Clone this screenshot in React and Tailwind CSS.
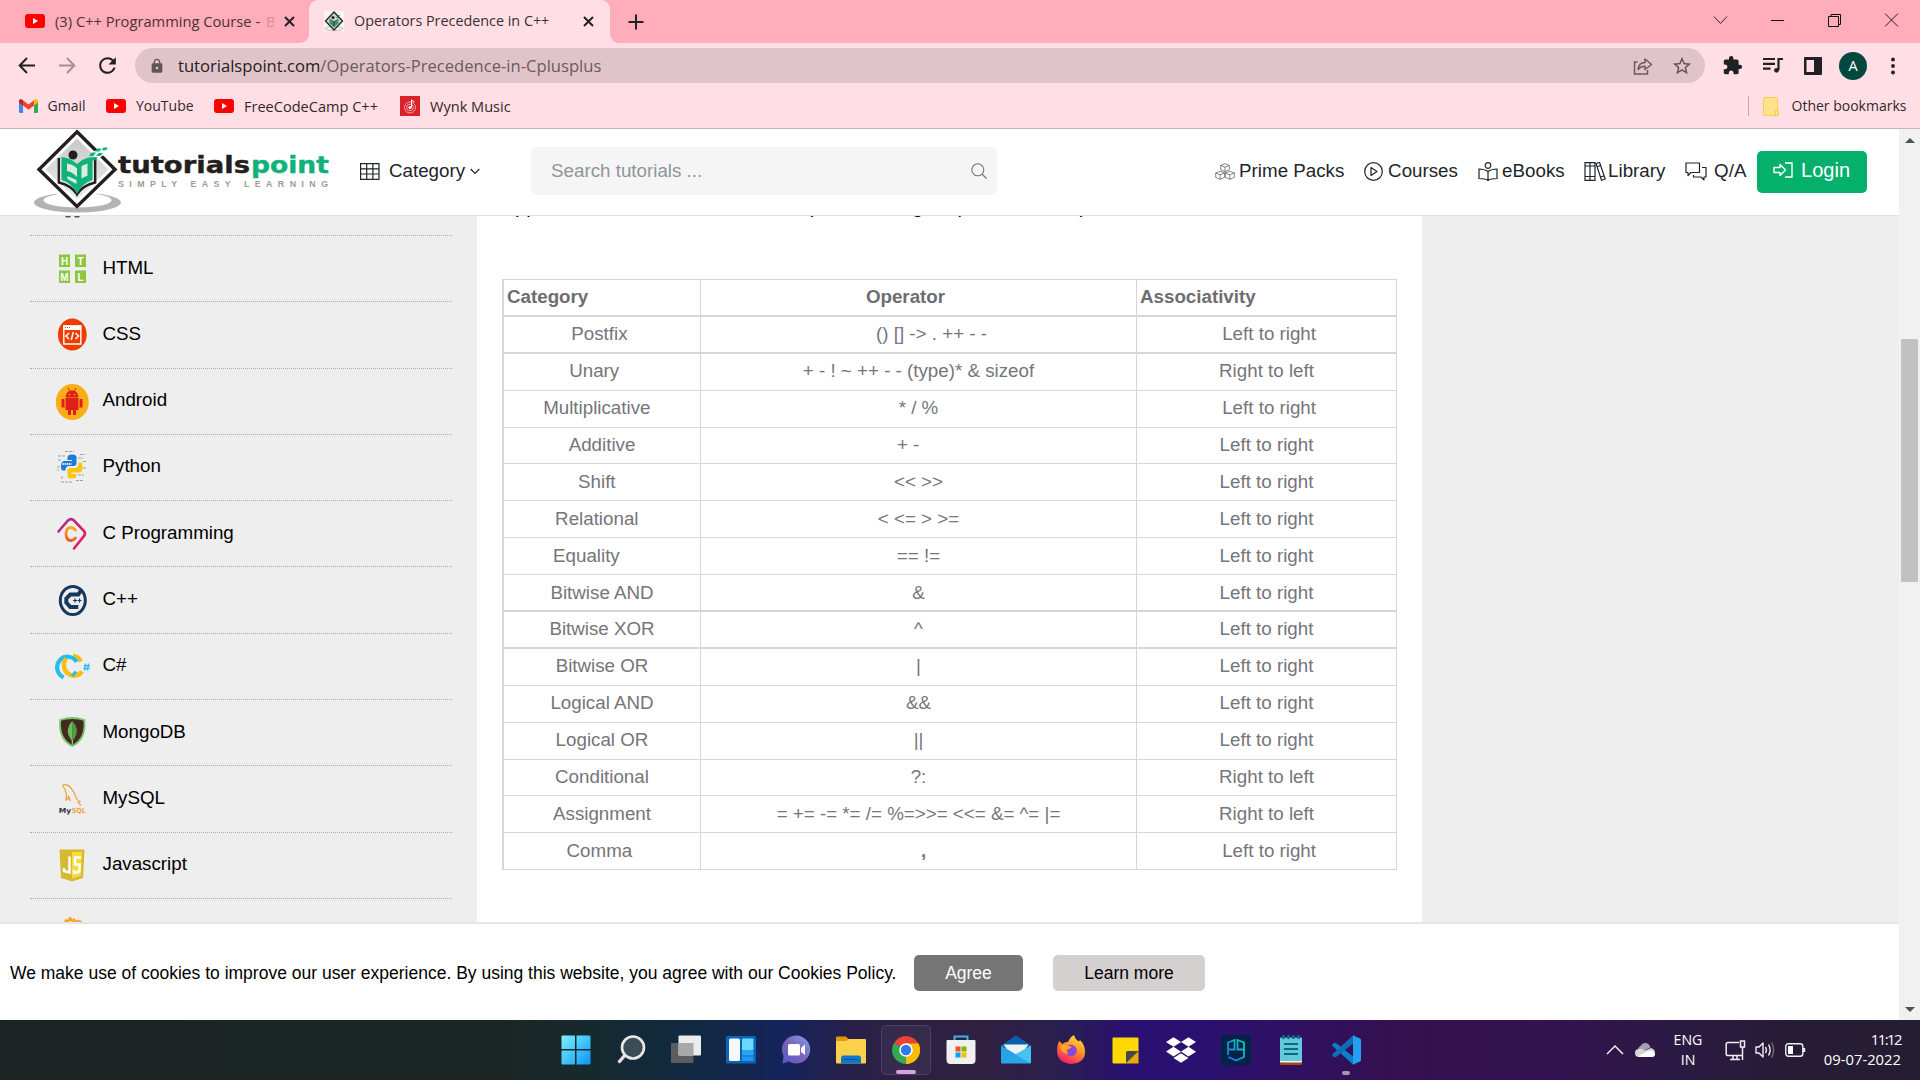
import { FaDropbox } from "react-icons/fa";
import { MdExtension, MdLock, MdRefresh, MdStarBorder } from "react-icons/md";

const SANS = "font-['Liberation_Sans',Arial,sans-serif]";
const UI = "font-['Open_Sans','Noto_Sans',sans-serif]";

/* ---------- browser chrome ---------- */

function YouTubeIcon() {
  return (
    <svg width="20" height="14" viewBox="0 0 20 14" className="shrink-0">
      <rect width="20" height="14" rx="3" fill="#f00" />
      <path d="M8 4v6l5-3z" fill="#fff" />
    </svg>
  );
}

function CloseX() {
  return (
    <svg width="11" height="11" viewBox="0 0 11 11" className="shrink-0">
      <path d="M1 1l9 9M10 1l-9 9" stroke="#202124" strokeWidth="2" />
    </svg>
  );
}

function TabStrip() {
  return (
    <div className="flex h-[43px] bg-[#ffacbb]">
      <div className="flex h-full w-[309px] items-center pb-[1px] pl-[25px]">
        <YouTubeIcon />
        <div className="ml-[10px] flex w-[219px] overflow-hidden whitespace-nowrap pb-[1px] text-[14.7px] leading-[20px] text-[#4a3237]">
          <span className="w-[211px] shrink-0">(3) C++ Programming Course -</span>
          <span className="text-[#d98c99]">B</span>
        </div>
        <div className="ml-[10px]">
          <CloseX />
        </div>
      </div>
      <div className="relative flex h-full w-[301px] items-center rounded-t-[9px] bg-[#ffdfe5] pb-[1px] pl-[15px]">
        <svg className="absolute -left-[9px] bottom-0" width="9" height="9">
          <path d="M0 9A9 9 0 0 0 9 0V9z" fill="#ffdfe5" />
        </svg>
        <svg className="absolute -right-[9px] bottom-0" width="9" height="9">
          <path d="M9 9A9 9 0 0 1 0 0V9z" fill="#ffdfe5" />
        </svg>
        <svg width="20" height="20" viewBox="0 0 20 20" className="shrink-0">
          <rect width="20" height="20" fill="#f6f6f6" />
          <ellipse cx="10" cy="17.5" rx="9" ry="2" fill="none" stroke="#bbb" />
          <path d="M10 1l8.5 9-8.5 9-8.500-9z" fill="#cfd4d2" stroke="#2b2b2b" strokeWidth="1.4" />
          <path d="M5.500 7.500l4.500 2.500 4.500-2.500v5L10 16l-4.500-3.500z" fill="#3f8f6c" />
          <path d="M10 10v6M12.500 7l3-3" stroke="#1e4a38" />
          <circle cx="9" cy="6.500" r="1.500" fill="#222" />
        </svg>
        <span className="ml-[10px] w-[200px] whitespace-nowrap pb-[1px] text-[14.35px] leading-[20px] text-[#3c2f32]">Operators Precedence in C++</span>
        <div className="ml-[29px]">
          <CloseX />
        </div>
      </div>
      <div className="flex flex-1 items-center pl-[18px]">
        <svg width="16" height="16" viewBox="0 0 16 16">
          <path d="M8 0.500v15M0.500 8h15" stroke="#202124" strokeWidth="2" />
        </svg>
        <div className="ml-auto flex h-[37px] items-center gap-[42px] pb-[4px] pr-[21px]">
          <svg width="15" height="14" viewBox="0 0 15 14" fill="none" stroke="#3a2a2d">
            <path d="M1 3.500l6.500 7 6.500-7" />
          </svg>
          <svg width="15" height="14" viewBox="0 0 15 14" stroke="#111">
            <path d="M1 7.500h13" />
          </svg>
          <svg width="15" height="14" viewBox="0 0 15 14" fill="none" stroke="#111">
            <path d="M1.500 3.500h10v10h-10zM4 3.500v-2h9.500v10h-2" />
          </svg>
          <svg width="15" height="14" viewBox="0 0 15 14" stroke="#2b1d20">
            <path d="M1 0.500l13 13M14 0.500l-13 13" />
          </svg>
        </div>
      </div>
    </div>
  );
}

function Toolbar() {
  return (
    <div className="flex h-[45px] items-center bg-[#ffdfe5]">
      <svg width="18" height="17" viewBox="0 0 18 17" fill="none" stroke="#202124" strokeWidth="2" className="ml-[18px]">
        <path d="M17 8.500H2M9 1L1.700 8.500 9 16" />
      </svg>
      <svg width="18" height="17" viewBox="0 0 18 17" fill="none" stroke="#a58f94" strokeWidth="2" className="ml-[22px]">
        <path d="M1 8.500h15M9 1l7.300 7.500L9 16" />
      </svg>
      <MdRefresh size={25} color="#202124" className="ml-[19px]" />
      <div className="ml-[15px] flex h-[35px] w-[1570px] items-center rounded-full bg-[#e1c4ca] pl-[14px] pr-[12px]">
        <MdLock size={16} color="#5f5458" />
        <span className="ml-[13px] whitespace-nowrap text-[16.600px] leading-[22px] text-[#6b5a5e]">
          <span className="text-[#26201f]">tutorialspoint.com</span>/Operators-Precedence-in-Cplusplus
        </span>
        <svg width="20" height="18" viewBox="0 0 20 18" fill="none" stroke="#6b5b5f" strokeWidth="1.500" className="ml-auto">
          <path d="M4.500 5H1.500v12h13v-4" />
          <path d="M5 12.500C5.500 7.500 8.500 5.500 12 5.500V2l6.500 5.500-6.500 5V9.200C9 9 7 10 5 12.500z" strokeLinejoin="round" />
        </svg>
        <MdStarBorder size={22} color="#5f5458" className="ml-[18px]" />
      </div>
      <MdExtension size={21} color="#202124" className="ml-[17px]" />
      <svg width="20" height="17" viewBox="0 0 20 17" fill="none" stroke="#202124" strokeWidth="2.200" className="ml-[20px]">
        <path d="M0 2h12M0 6.800h12M0 11.600h7.500M15.500 13V2H20" />
        <circle cx="13.500" cy="13.300" r="2.400" fill="#202124" stroke="none" />
      </svg>
      <svg width="18" height="18" viewBox="0 0 18 18" className="ml-[21px]">
        <rect width="18" height="18" rx="1" fill="#202124" />
        <rect x="2.500" y="3" width="7.500" height="12" fill="#ffdfe5" />
      </svg>
      <div className="ml-[17px] flex h-[28px] w-[28px] items-center justify-center rounded-full bg-[#00493f] text-[14.500px] text-white">A</div>
      <svg width="4" height="18" viewBox="0 0 4 18" fill="#202124" className="ml-[24px]">
        <circle cx="2" cy="2.500" r="1.900" />
        <circle cx="2" cy="9" r="1.900" />
        <circle cx="2" cy="15.500" r="1.900" />
      </svg>
    </div>
  );
}

function Bookmarks() {
  return (
    <div className="flex h-[40px] items-center whitespace-nowrap bg-[#ffdfe5] pb-[4px] text-[14px] leading-[20px] text-[#33272a]">
      <svg width="19" height="14" viewBox="0 0 19 14" className="ml-[19px]">
        <path d="M0 2v10.500Q0 14 1.500 14H4V5z" fill="#4285f4" />
        <path d="M19 2v10.500q0 1.500-1.500 1.500H15V5z" fill="#34a853" />
        <path d="M4 1.300L9.500 5.500 15 1.300V6.500L9.500 10.700 4 6.500z" fill="#ea4335" />
        <path d="M15 1.300l1-.7q1.200-.9 2.300-.1.700.6.700 1.500v1.500l-4 3z" fill="#fbbc04" />
        <path d="M4 1.300L3 .6Q1.800-.3.700.5 0 1.100 0 2v1.500l4 3z" fill="#c5221f" />
      </svg>
      <span className="ml-[9.500px] w-[58.500px]">Gmail</span>
      <YouTubeIcon />
      <span className="ml-[10px] w-[78px]">YouTube</span>
      <YouTubeIcon />
      <span className="ml-[10px] w-[156px] text-[14.550px]">FreeCodeCamp C++</span>
      <svg width="20" height="20" viewBox="0 0 20 20">
        <rect width="20" height="20" fill="#d8232c" />
        <circle cx="10" cy="11.500" r="5.500" fill="none" stroke="#f0a0a4" />
        <circle cx="10" cy="11.500" r="3.300" fill="none" stroke="#f0a0a4" />
        <circle cx="10" cy="11.500" r="1.500" fill="#fff" />
        <path d="M11.500 11.500V4l3 2" fill="none" stroke="#fff" />
      </svg>
      <span className="ml-[10px] text-[14.550px]">Wynk Music</span>
      <div className="ml-auto h-[20px] w-px bg-[#c9a5ad]" />
      <svg width="16" height="19" viewBox="0 0 16 19" className="ml-[14px]">
        <rect x="0.500" y="0.500" width="14" height="18" rx="1.500" fill="#ffe38a" stroke="#f7cf4b" />
        <path d="M12.500 18.500v-4q0-2 1.500-2t1.500 2v2.500q0 1.500-1.500 1.500z" fill="#ffe38a" stroke="#f7c93b" />
      </svg>
      <span className="ml-[12.500px] mr-[13.500px] w-[115px]">Other bookmarks</span>
    </div>
  );
}

/* ---------- site header ---------- */

function Logo() {
  return (
    <svg width="300" height="85" viewBox="0 0 300 85" className="ml-[30px] shrink-0">
      <defs>
        <linearGradient id="dia" x1="0" y1="0" x2="0" y2="1">
          <stop offset="0" stopColor="#c6c8ca" />
          <stop offset="1" stopColor="#eceded" />
        </linearGradient>
      </defs>
      <path d="M47.500 63.500A43.500 10 0 1 1 47.400 63.500zM47.500 63.800A34 7.400 0 1 0 47.600 63.800z" fill="#b3b3b3" fillRule="evenodd" />
      <path d="M16 58L47 30 78 58 47 76z" fill="#fff" />
      <path d="M47 2.800L85 40.500 47 77.500 9 40.500z" fill="#fff" stroke="#231f20" strokeWidth="3.400" />
      <path d="M47 9.500L78.500 40.500 47 71 15.500 40.500z" fill="url(#dia)" />
      <path d="M61 23l12-3.500 5 4-13 8z" fill="#fff" />
      <path d="M28.800 29v24.500q13 3 18.200 12 5.200-9 18.200-12V29" fill="none" stroke="#231f20" strokeWidth="2.400" />
      <path d="M31.500 28q9.500 1 15.500 7 6-6 15.500-7v23q-10.500 3-15.500 14-5-11-15.500-14z" fill="#10b27a" />
      <path d="M37 34.500q6.500 1 10 5v8.500q-4.500-5-10-6zM51.500 37l6-2.500v12l-6 3zM46.500 55l-9-5v-3l9 4z" fill="#dcebe4" />
      <circle cx="43" cy="26" r="4.500" fill="#231f20" />
      <path d="M61.500 23.500h4.500l-2.500 3.500h-4.500zM67 19.500h4.500l-2 3H65zM73.500 18.500h4.500l-2 2.700h-4.500zM68.500 24h4.500l-2.500 3h-4.500zM63 28h4.500l-2.500 3.500h-4.500z" fill="#10b27a" />
      <text x="88" y="44" fontFamily="DejaVu Sans" fontWeight="bold" fontSize="22.500" fill="#231f20" stroke="#231f20" strokeWidth="0.400" textLength="132" lengthAdjust="spacingAndGlyphs">tutorials</text>
      <text x="221" y="44" fontFamily="DejaVu Sans" fontWeight="bold" fontSize="22.500" fill="#10b27a" stroke="#10b27a" strokeWidth="0.400" textLength="78" lengthAdjust="spacingAndGlyphs">point</text>
      <text x="88" y="58.300" fontFamily="Liberation Sans" fontWeight="bold" fontSize="8.800" fill="#9b9b9b" textLength="210" lengthAdjust="spacing">SIMPLY EASY LEARNING</text>
    </svg>
  );
}

const line = { fill: "none", stroke: "#212529", strokeWidth: 1.2, className: "shrink-0" };

function NavIcon({ name }) {
  if (name === "packs")
    return (
      <svg width="20" height="17" viewBox="0 0 20 17" {...line} strokeWidth="0.700" stroke="#50555a">
        <path d="M10 .7l4.300 1.700v4.300L10 8.600 5.700 6.700V2.400zM5.700 2.400L10 4.200l4.300-1.800M10 4.200v4.400" />
        <path d="M5.200 8.200l4.500 1.800v4.300l-4.500 2-4.500-2V10zM.7 10l4.500 1.800L9.700 10M5.200 11.800v4.500" />
        <path d="M14.800 8.200l4.500 1.800v4.300l-4.500 2-4.500-2V10zM10.300 10l4.500 1.800 4.500-1.800M14.800 11.800v4.500" />
      </svg>
    );
  if (name === "courses")
    return (
      <svg width="19" height="19" viewBox="0 0 19 19" {...line}>
        <circle cx="9.500" cy="9.500" r="8.800" />
        <path d="M7 5.500v8l6-4z" strokeLinejoin="round" />
      </svg>
    );
  if (name === "ebooks")
    return (
      <svg width="20" height="19" viewBox="0 0 20 19" {...line}>
        <circle cx="10" cy="3.500" r="2.800" />
        <path d="M10 9.500C8 8 5 7 1 7v9.500c4 0 7 .5 9 2 2-1.500 5-2 9-2V7c-4 0-7 1-9 2.500zM10 9.500v9" />
      </svg>
    );
  if (name === "library")
    return (
      <svg width="22" height="19" viewBox="0 0 22 19" {...line}>
        <path d="M1 .7h5v17.600H1zM6 .7h5v17.600H6zM1 4h10M1 14.500h10" />
        <path d="M12 1.500l3.600-1 5.600 16.500-3.700 1.300zM13 4.700l3.700-1.200M16.600 15l3.700-1.200" />
      </svg>
    );
  return (
    <svg width="22" height="19" viewBox="0 0 22 19" {...line}>
      <path d="M1 1h13.500v9.500H6l-3 3v-3H1z" strokeLinejoin="round" />
      <path d="M17 5.500h4V15h-2v3l-3-3H8.500v-2" strokeLinejoin="round" />
    </svg>
  );
}

function SiteHeader() {
  return (
    <header className={`flex h-[87px] items-center border-b border-[#e2e2e2] bg-white pb-[2px] text-[18.75px] leading-[24px] text-[#212529] ${SANS}`}>
      <Logo />
      <svg width="20" height="17" viewBox="0 0 20 17" fill="none" stroke="#212529" strokeWidth="1.200" className="ml-[30px] shrink-0">
        <path d="M.6.600h18.400v15.800H.6zM.6 5.800h18.400M.6 11h18.400M6.700.600v15.800M12.900.600v15.800" />
      </svg>
      <span className="ml-[9px]">Category</span>
      <svg width="10" height="7" viewBox="0 0 10 7" fill="none" stroke="#212529" strokeWidth="1.200" className="ml-[5px] shrink-0">
        <path d="M.7 1l4.300 4.500L9.300 1" />
      </svg>
      <div className="ml-[51px] flex h-[48px] w-[466px] shrink-0 items-center rounded-[6px] bg-[#f5f5f5] pl-[20px] pr-[10px] text-[#8f959b]">
        <span>Search tutorials ...</span>
        <svg width="16" height="16" viewBox="0 0 16 16" fill="none" stroke="#6c757d" strokeWidth="1.100" className="ml-auto">
          <circle cx="6.800" cy="6.800" r="6" />
          <path d="M11 11l4.500 4.500" />
        </svg>
      </div>
      <nav className="ml-[218px] flex flex-1 items-center whitespace-nowrap">
        <div className="flex w-[149px] items-center gap-[4px]">
          <NavIcon name="packs" />
          Prime Packs
        </div>
        <div className="flex w-[114px] items-center gap-[5px]">
          <NavIcon name="courses" />
          Courses
        </div>
        <div className="flex w-[106px] items-center gap-[4px]">
          <NavIcon name="ebooks" />
          eBooks
        </div>
        <div className="flex w-[101px] items-center gap-[2px]">
          <NavIcon name="library" />
          Library
        </div>
        <div className="flex w-[72px] items-center gap-[7px]">
          <NavIcon name="qa" />
          Q/A
        </div>
      </nav>
      <button className="mr-[32px] mt-[1px] flex h-[42px] w-[110px] items-center rounded-[5px] bg-[#04b06c] pb-[3px] pl-[16px] text-[20px] text-white">
        <svg width="20" height="16" viewBox="0 0 20 16" fill="none" stroke="#fff" strokeWidth="1.400">
          <path d="M1 5.500h6V2.500L12.500 8 7 13.500v-3H1z" strokeLinejoin="round" />
          <path d="M12 1h7v14h-7" />
        </svg>
        <span className="ml-[8px]">Login</span>
      </button>
    </header>
  );
}

/* ---------- sidebar ---------- */

const TOPIC_ICONS = {
  HTML: (
    <g>
      {[["H", 5, 3.500], ["T", 21, 3.500], ["M", 5, 19.500], ["L", 21, 19.500]].map(([c, x, y]) => (
        <g key={c}>
          <rect x={x} y={y} width="11" height="12.500" fill="#8cc63f" />
          <text x={x + 5.500} y={y + 10} textAnchor="middle" fontFamily="Liberation Sans" fontWeight="bold" fontSize="10" fill="#fff">{c}</text>
        </g>
      ))}
    </g>
  ),
  CSS: (
    <g>
      <ellipse cx="18.300" cy="17.500" rx="14.400" ry="16" fill="#f03c00" />
      <path d="M9.800 9h17v18h-17z" fill="none" stroke="#fff" strokeWidth="1.400" />
      <path d="M9.300 8.500h18V13h-18z" fill="#fff" />
      <path d="M11 10.500h5" stroke="#f03c00" strokeDasharray="1 1" />
      <path d="M15 16L12 19l3 3M21.500 16l3 3-3 3M19.300 15l-2 8" fill="none" stroke="#fff" strokeWidth="1.500" />
    </g>
  ),
  Android: (
    <g>
      <ellipse cx="18.300" cy="18" rx="16.500" ry="18" fill="#fbae17" />
      <path d="M11.500 13.500C12 8 15 6.500 18 6.500s6 1.500 6.500 7z" fill="#df1f1a" />
      <path d="M14 4l1.500 3M22 4l-1.500 3" stroke="#df1f1a" />
      <path d="M11.500 14h13v12h-13zM7.500 15h3v8.500h-3zM25.500 15h3v8.500h-3zM14 25h3v6h-3zM19 25h3v6h-3z" fill="#df1f1a" />
      <circle cx="15.500" cy="10.500" r=".8" fill="#fbae17" />
      <circle cx="20.500" cy="10.500" r=".8" fill="#fbae17" />
    </g>
  ),
  Python: (
    <g>
      <path d="M13.500 7q0-2.500 4.500-2.500t4.500 2.500v6q0 3-3 3h-4.500q-3.500 0-3.500 4.500H8.500q-1.500 0-1.500-4.500t3-5h8v-1h-4.500z" fill="#1c7cd5" />
      <path d="M22.500 26q0 2.500-4.500 2.500t-4.500-2.500v-5q0-3 3-3h4.500q3.500 0 3.500-5.500h2.500q1.500 0 1.500 5t-3 5h-8v1.500h5z" fill="#fbc60e" />
      <path d="M8.500 14h9" stroke="#d8ecff" strokeWidth="1.800" strokeDasharray="1.500 .6" />
      <path d="M11 1.500h9M4 6h8M4 10h4M26 4.500h5M24 8h5M29 11.500h3M3 17h4M3 20h2M29 18h4M24 25h6M8 26v3M7 32h11M22 30.500h7" stroke="#9aa0a5" strokeWidth="1" strokeDasharray="3 1" />
    </g>
  ),
  "C Programming": (
    <g fill="none" strokeLinecap="round">
      <defs>
        <linearGradient id="cp" x1="0" y1="0" x2="1" y2="1">
          <stop offset="0" stopColor="#a3318f" />
          <stop offset="1" stopColor="#f5145a" />
        </linearGradient>
        <linearGradient id="cc" x1="0" y1="0" x2="0" y2="1">
          <stop offset="0" stopColor="#fba81c" />
          <stop offset="1" stopColor="#ee5a24" />
        </linearGradient>
      </defs>
      <path d="M4.500 15.500L14 4.500q3-3 6 0l10 10.500q2 2.500 0 5L20 32.500" stroke="url(#cp)" strokeWidth="2.600" />
      <path d="M21.500 14q-2-2.500-4.500-2.500-5 0-5 6.500t5 6.500q2.500 0 4.500-2.500" stroke="url(#cc)" strokeWidth="2.800" />
    </g>
  ),
  "C++": (
    <g fill="none" stroke="#17375e">
      <ellipse cx="18.800" cy="17.500" rx="12.500" ry="14" strokeWidth="3" />
      <path d="M27.300 7l-3 4.500h-8l-4 4v4l4 4.500h8" strokeWidth="4" />
      <path d="M19 17.500h4M21 15.500v4M23.500 17.500h4M25.500 15.500v4" strokeWidth="1.200" />
    </g>
  ),
  "C#": (
    <g fill="none">
      <path d="M27 12.500q-2.500-5-8-6" stroke="#fbbd13" strokeWidth="4" />
      <path d="M23.500 13A10.500 10.700 0 1 0 10.500 28.300" stroke="#25bdee" strokeWidth="4.200" transform="translate(-.8 0)" />
      <path d="M12 9.500A10 10.700 0 1 0 28 22.500" stroke="#fbbd13" strokeWidth="4.400" />
      <path d="M18 27l4-4.500" stroke="#25bdee" strokeWidth="3" />
      <path d="M31.500 14.500l-1 7M34.500 14.500l-1 7M30 16.700h6M29.500 19.500h6" stroke="#25bdee" strokeWidth="1.300" />
    </g>
  ),
  MongoDB: (
    <g>
      <path d="M6.300 5q12-4 24 0 2 19-12 26Q4.300 24 6.300 5z" fill="#422a20" stroke="#7ac56b" strokeWidth="1.800" />
      <path d="M18.300 6q9 10 0 20z" fill="#4f9e46" />
      <path d="M18.300 6q-9 10 0 20z" fill="#6fbb58" />
      <path d="M18.300 25v4.500" stroke="#d8d8c8" />
    </g>
  ),
  MySQL: (
    <g>
      <path d="M9 3q4-1.500 7.500 2.500 4.500 5 5.500 10 1 3 4 4l-2 1 3 3M9 3q-.5 2 2 4 .5 3 1.500 5l-.500 6 1.500-.5 1-3 2 4.500" fill="none" stroke="#e8a33a" strokeWidth="1.200" />
      <text x="4.800" y="30.500" fontFamily="DejaVu Sans" fontWeight="bold" fontSize="7" fill="#333" textLength="12.500" lengthAdjust="spacingAndGlyphs">My</text>
      <text x="17.800" y="30.500" fontFamily="DejaVu Sans" fontWeight="bold" fontSize="7" fill="#f0a23c" textLength="14" lengthAdjust="spacingAndGlyphs">SQL</text>
    </g>
  ),
  Javascript: (
    <g>
      <path d="M5.500 1.500h25L29 30l-11 3.500L7 30z" fill="#d6ba32" />
      <path d="M18 4h10L26.700 28 18 30.500z" fill="#fbdb39" />
      <path d="M15.500 8.500v16L10 23v-3" fill="none" stroke="#fff" strokeWidth="2.400" />
      <path d="M27 9.500h-6v7h4.800l-.5 7-5.300 1.500v-3" fill="none" stroke="#fff" strokeWidth="2.400" />
    </g>
  ),
};

const TOPICS = ["HTML", "CSS", "Android", "Python", "C Programming", "C++", "C#", "MongoDB", "MySQL", "Javascript"];

function Sidebar() {
  return (
    <aside className="w-[477px] shrink-0 bg-[#eee] pl-[30px] text-[18.75px] text-black">
      <div className="h-[20px] w-[422px] border-b border-dotted border-[#aaa]">
        <svg width="16" height="3" viewBox="0 0 16 3" className="ml-[35px]">
          <path d="M0 0h6l-1 1.500H1zM9 0h6l-1 1.500h-4z" fill="#555" />
        </svg>
      </div>
      {TOPICS.map((t) => (
        <div key={t} className="flex h-[66.300px] w-[422px] items-center border-b border-dotted border-[#aaa] pl-[24px]">
          <svg width="36" height="36" viewBox="0 0 36 36" className="mt-[1px] shrink-0">
            {TOPIC_ICONS[t]}
          </svg>
          <span className="-mt-[2px] ml-[12.500px]">{t}</span>
        </div>
      ))}
      <svg width="20" height="20" viewBox="0 0 20 20" className="ml-[34px] mt-[18px]">
        <circle cx="6.500" cy="7" r="5" fill="none" stroke="#f5a623" strokeWidth="3.500" strokeDasharray="3 1.200" />
        <circle cx="6.500" cy="7" r="4" fill="none" stroke="#f5a623" strokeWidth="2.500" />
        <circle cx="14.500" cy="7" r="3" fill="none" stroke="#f5a623" strokeWidth="2" />
      </svg>
    </aside>
  );
}

/* ---------- operator table ---------- */

const ROWS = [
  ["Postfix ", "     () [] -> . ++ - -", " Left to right"],
  ["Unary   ", "+ - ! ~ ++ - - (type)* & sizeof", "Right to left"],
  ["Multiplicative  ", "* / %", " Left to right"],
  ["Additive", "+ -    ", "Left to right"],
  ["Shift  ", "<< >>", "Left to right"],
  ["Relational  ", "< <= > >=", "Left to right"],
  ["Equality      ", "== !=", "Left to right"],
  ["Bitwise AND", "&", "Left to right"],
  ["Bitwise XOR", "^", "Left to right"],
  ["Bitwise OR", "|", "Left to right"],
  ["Logical AND", "&&", "Left to right"],
  ["Logical OR", "||", "Left to right"],
  ["Conditional", "?:", "Right to left"],
  ["Assignment", "= += -= *= /= %=>>= <<= &= ^= |=", "Right to left"],
  ["Comma ", "  ,", " Left to right"],
];
const THICK = new Set([0, 7, 8]);

function OperatorTable() {
  return (
    <div className="w-[895px] whitespace-pre border-l-2 border-t border-[#d6d6d6] text-[18.75px] leading-[24px] text-[#75757a]">
      <div className="grid h-[36.900px] grid-cols-[197px_436px_1fr] border-b-2 border-[#d6d6d6] font-bold text-[#6d6d72]">
        <div className="border-r border-[#d6d6d6] pl-[3px] pt-[5.400px]">Category</div>
        <div className="border-r border-[#d6d6d6] pt-[5.400px] text-center">{"Operator     "}</div>
        <div className="border-r border-[#d6d6d6] pl-[3px] pt-[5.400px]">Associativity</div>
      </div>
      {ROWS.map((r, i) => (
        <div
          key={r[0]}
          className={`grid h-[36.900px] grid-cols-[197px_436px_1fr] border-[#d6d6d6] text-center ${THICK.has(i) ? "border-b-2" : "border-b"}`}
        >
          {r.map((c, j) => (
            <div key={j} className={`border-r border-[#d6d6d6] pt-[5.400px] ${j === 1 && i === 14 ? "font-bold" : ""}`}>
              {c}
            </div>
          ))}
        </div>
      ))}
    </div>
  );
}

function ScrollBar() {
  return (
    <div className="flex w-[21px] shrink-0 flex-col items-center bg-[#f1f1f1]">
      <svg width="10" height="5" viewBox="0 0 10 5" className="mt-[9px]">
        <path d="M5 0l5 5H0z" fill="#505050" />
      </svg>
      <div className="mt-[196px] h-[243px] w-[17px] bg-[#c1c1c1]" />
      <svg width="10" height="5" viewBox="0 0 10 5" className="mb-[8px] mt-auto">
        <path d="M0 0h10L5 5z" fill="#505050" />
      </svg>
    </div>
  );
}

function CookieBar() {
  return (
    <div className="flex h-[98px] items-center border-t-2 border-[#e8e3e5] bg-white pl-[10px] pt-[2px] text-[17.500px] leading-[22px] text-black">
      <span className="w-[904px] whitespace-nowrap">
        We make use of cookies to improve our user experience. By using this website, you agree with our Cookies Policy.
      </span>
      <button className="h-[36px] w-[109px] rounded-[5px] bg-[#757575] text-white">Agree</button>
      <button className="ml-[30px] h-[36px] w-[152px] rounded-[5px] bg-[#d5d0d0]">Learn more</button>
    </div>
  );
}

/* ---------- taskbar ---------- */

const TASK_ICONS = [
  <svg key="start" width="30" height="30" viewBox="0 0 30 30">
    <defs>
      <linearGradient id="win" x1="0" y1="0" x2="1" y2="1">
        <stop offset="0" stopColor="#7df0ff" />
        <stop offset="1" stopColor="#0a97f5" />
      </linearGradient>
    </defs>
    <path d="M.5 1.500q0-1 1-1H14V14H.5zM15.500.5H28.500q1 0 1 1V14h-14zM.5 15.500H14v14H1.500q-1 0-1-1zM15.500 15.500h14v13q0 1-1 1h-13z" fill="url(#win)" />
  </svg>,
  <svg key="search" width="30" height="30" viewBox="0 0 30 30">
    <path d="M9.500 19.500L3.500 26.500" stroke="#e4e4e4" strokeWidth="3.400" strokeLinecap="round" />
    <circle cx="17" cy="12.500" r="11" fill="#3c4c55" stroke="#e8e8e8" strokeWidth="2.600" />
  </svg>,
  <svg key="task" width="30" height="30" viewBox="0 0 30 30">
    <rect y="8" width="22.500" height="20" rx="1" fill="#5d5d5d" />
    <rect x="7.500" y="0.500" width="22.500" height="20" rx="1" fill="#ececec" />
    <rect x="7.500" y="8" width="15" height="12.500" fill="#a9a9a9" />
  </svg>,
  <svg key="widgets" width="30" height="30" viewBox="0 0 30 30">
    <rect y="1" width="30" height="27.500" rx="1.500" fill="#0c64b4" />
    <rect x="3" y="3.500" width="11" height="22.500" rx="1.500" fill="#f4f8fb" />
    <rect x="16" y="3.500" width="11.500" height="12" rx="1" fill="#6ad8ff" />
    <rect x="16" y="15.800" width="11.500" height="4.700" fill="#2aa4f4" />
    <rect x="16" y="21.300" width="11.500" height="4.700" fill="#2196f0" />
  </svg>,
  <svg key="chat" width="30" height="30" viewBox="0 0 30 30">
    <defs>
      <linearGradient id="chat" x1="1" y1="0" x2="0" y2="1">
        <stop offset="0" stopColor="#7fa0f0" />
        <stop offset=".5" stopColor="#7b63b8" />
        <stop offset="1" stopColor="#5457cf" />
      </linearGradient>
    </defs>
    <path d="M15 .5a14 14 0 1 1-7 26l-6.500 2L2.500 21A14 14 0 0 1 15 .5z" fill="url(#chat)" />
    <rect x="7" y="9" width="12" height="11.500" rx="1.500" fill="#fff" />
    <path d="M20 13l4-3.500v10.500l-4-3z" fill="#fff" />
  </svg>,
  <svg key="files" width="30" height="30" viewBox="0 0 30 30">
    <path d="M0 2.500Q0 1.500 1 1.500h9l3 3V9H0z" fill="#dd9a08" />
    <path d="M0 6h10l3-2h16q1 0 1 1v22.500q0 1-1 1H1q-1 0-1-1z" fill="#fdd04a" />
    <path d="M5 28.500v-5q0-3 2.500-3h15q2.500 0 2.500 3v5z" fill="#0b78cb" />
    <path d="M8 24.500h14" stroke="#075190" />
  </svg>,
  <svg key="chrome" width="28" height="28" viewBox="0 0 28 28">
    <path d="M14 14L1.900 7A14 14 0 0 1 26.100 7z" fill="#ea4335" />
    <path d="M14 14L26.100 7A14 14 0 0 1 14 28z" fill="#fbbc05" />
    <path d="M14 14L14 28A14 14 0 0 1 1.900 7z" fill="#34a853" />
    <path d="M14 7.500H26.400A14 14 0 0 1 14 28l5.500-9.800z" fill="#fbbc05" />
    <circle cx="14" cy="14" r="6.800" fill="#fff" />
    <circle cx="14" cy="14" r="5.200" fill="#3179ee" />
  </svg>,
  <svg key="store" width="30" height="30" viewBox="0 0 30 30">
    <path d="M8.500 6V1.500h13V6" fill="none" stroke="#35b4ea" strokeWidth="2" />
    <path d="M.5 6q0-1 1-1h27q1 0 1 1v19q0 4-4 4H4.500q-4 0-4-4z" fill="#f0f0f0" />
    <path d="M9.500 11.500h5v5h-5z" fill="#f25022" />
    <path d="M15.500 11.500h5v5h-5z" fill="#7fba00" />
    <path d="M9.500 17.500h5v5h-5z" fill="#00a4ef" />
    <path d="M15.500 17.500h5v5h-5z" fill="#ffb900" />
  </svg>,
  <svg key="mail" width="30" height="30" viewBox="0 0 30 30">
    <path d="M0 10.500L15 .5l15 10v8H0z" fill="#0a5fae" />
    <path d="M2.500 9.500h25L20 20H10z" fill="#f1f1f1" />
    <path d="M0 10.500L30 28H1q-1 0-1-1z" fill="#25a3e6" />
    <path d="M30 10.500L14 19.500 29 28.500q1 0 1-1z" fill="#45c4f3" />
    <path d="M0 28L14 19.500 29 28.500H1q-1 0-1-.5z" fill="#2aa7ea" />
  </svg>,
  <svg key="firefox" width="30" height="30" viewBox="0 0 30 30">
    <defs>
      <linearGradient id="ff" x1=".8" y1="0" x2=".3" y2="1">
        <stop offset="0" stopColor="#ffe63c" />
        <stop offset=".45" stopColor="#ff9522" />
        <stop offset="1" stopColor="#f5156c" />
      </linearGradient>
    </defs>
    <path d="M3 6l3.500 3Q9 6.500 12 7q2-5 6-7 1 4 5 6.500L24 5q5 5 5 12 0 11-14 12Q1 27.500 1 15.500 1 10 3 6z" fill="url(#ff)" />
    <circle cx="15" cy="15.500" r="5.800" fill="#8a48d8" />
    <path d="M3.500 10.500q6-1 9 .5 2 .5 3.500 1-2 2-5 2.500-.5 2.500 1.500 4.500-7 0-9-8.500z" fill="#ffa524" />
  </svg>,
  <svg key="notes" width="27" height="27" viewBox="0 0 27 27">
    <path d="M.5 1.500q0-1 1-1h24q1 0 1 1V14L14 26.500H1.500q-1 0-1-1z" fill="#fed906" />
    <path d="M14 26.500L26.500 14v12.500z" fill="#eda909" />
    <path d="M14 26V15.500q0-1.500 1.500-1.500h11z" fill="#474747" />
  </svg>,
  <FaDropbox key="dropbox" size={30} color="#fff" />,
  <svg key="pg" width="30" height="30" viewBox="0 0 30 30">
    <defs>
      <linearGradient id="pg" x1="1" y1="0" x2="0" y2="1">
        <stop offset="0" stopColor="#18d0a8" />
        <stop offset="1" stopColor="#1474ee" />
      </linearGradient>
    </defs>
    <rect width="30" height="30" fill="#01234a" />
    <path d="M7 20V7.500L13.500 5v9.500H7.500M23 14.500h-6.500V5L23 7.500V22l-8 3.500-7.500-3.500" fill="none" stroke="url(#pg)" strokeWidth="1.800" />
  </svg>,
  <svg key="notepad" width="30" height="30" viewBox="0 0 30 30">
    <rect x="4" y="26" width="22" height="4" rx="1" fill="#a5490c" />
    <rect x="4" y="3" width="22" height="24.500" rx="1" fill="#f5f5f5" />
    <rect x="4" y="2.500" width="22" height="23.500" rx="1" fill="#62c9dc" />
    <path d="M7.500 0v4M12.500 0v4M17.500 0v4M22.500 0v4" stroke="#0d6b84" strokeWidth="2.400" />
    <path d="M8 9h14M8 14h14M8 19h14" stroke="#11677f" strokeWidth="1.800" />
  </svg>,
  <svg key="code" width="30" height="30" viewBox="0 0 30 30">
    <path d="M1.500 9.500L3 8q1-.7 2 0L24 23v6q-.5 1-2 .5L1.500 11q-.7-.8 0-1.500z" fill="#0a7fcb" />
    <path d="M1.500 20.500L3 22q1 .7 2 0L24 7V1q-.5-1-2-.5L1.500 19q-.7.800 0 1.500z" fill="#0f6db5" />
    <path d="M22 .5L29 3.500q1 .5 1 1.500v20q0 1-1 1.500l-7 3z" fill="#22a0f2" />
  </svg>,
];

function Taskbar() {
  return (
    <div className="flex h-[60px] items-center bg-[linear-gradient(90deg,#1b2422_0px,#1b2624_500px,#152a30_600px,#112944_700px,#15245c_785px,#2a2046_860px,#302040_980px,#291f50_1060px,#2a1070_1130px,#2a1070_1200px,#36104f_1400px,#33134f_1560px,#2a1a42_1680px,#271c36_1800px,#251d33_1920px)] pl-[548px] text-white">
      {TASK_ICONS.map((icon, i) => (
        <div key={i} className="flex w-[55px] shrink-0 items-center justify-center">
          <div
            className={
              i === 6
                ? "relative flex h-[50px] w-[50px] items-center justify-center rounded-[5px] border border-white/10 bg-white/5"
                : "relative flex h-[50px] w-[50px] items-center justify-center"
            }
          >
            {icon}
            {i === 6 && <span className="absolute bottom-0 h-[4px] w-[20px] rounded-full bg-[#dc9fe6]" />}
            {i === 14 && <span className="absolute bottom-0 h-[4px] w-[8px] rounded-full bg-[#a594b4]" />}
          </div>
        </div>
      ))}
      <div className="ml-auto flex items-center pr-[18px] text-[14.800px] leading-[20px]">
        <svg width="18" height="10" viewBox="0 0 18 10" fill="none" stroke="#fff" strokeWidth="1.400">
          <path d="M1 9l8-8 8 8" />
        </svg>
        <svg width="20" height="14" viewBox="0 0 20 14" className="ml-[11px]">
          <path d="M3.500 10a5 5 0 0 1 2-7Q7 0 10.500 0t5 4.500z" fill="#a69fb0" />
          <path d="M4 14a4 4 0 0 1 0-8q3-1 6 1.500L16 5q4 1 4 5t-3.500 4z" fill="#d8d5dc" />
          <path d="M3 13.500L13 8q5-1 7 3 0 3-3.500 3H4z" fill="#fff" />
        </svg>
        <div className="ml-[18px] w-[30px] text-center text-[14.200px]">
          ENG
          <br />
          IN
        </div>
        <svg width="21" height="21" viewBox="0 0 21 21" fill="none" stroke="#f0edf3" strokeWidth="1.500" className="ml-[22px]">
          <path d="M14 2.500H3q-1.800 0-1.800 1.800v9.500q0 1.800 1.800 1.800h14.500M5 19.500h10M8 16v3M12 16v3" />
          <path d="M15.500 1h4v6h-4zM17.500 7v13" />
        </svg>
        <svg width="20" height="18" viewBox="0 0 20 18" fill="none" stroke="#f0edf3" strokeWidth="1.400" className="ml-[9px]">
          <path d="M1 6h3l4-4v14l-4-4H1z" strokeLinejoin="round" />
          <path d="M10.500 6q1.800 3 0 6M13.500 3.500q3.300 5.500 0 11" />
          <path d="M16.500 1.500q4.300 7.500 0 15" stroke="#75697f" />
        </svg>
        <svg width="21" height="14" viewBox="0 0 21 14" fill="none" stroke="#f0edf3" strokeWidth="1.400" className="ml-[10px]">
          <rect x=".8" y=".8" width="17" height="12.400" rx="2.500" />
          <rect x="3" y="3" width="5" height="8" fill="#fff" stroke="none" />
          <path d="M19 5v4" strokeWidth="2.400" />
        </svg>
        <div className="-mt-[3px] ml-[17px] mr-[1px] w-[78px] text-right">
          <span className="tracking-[-1.500px]">11:12</span>
          <br />
          09-07-2022
        </div>
      </div>
    </div>
  );
}

export default function App() {
  return (
    <div className={`flex h-[1080px] w-[1920px] flex-col overflow-hidden bg-white ${UI}`}>
      <TabStrip />
      <Toolbar />
      <Bookmarks />
      <div className={`flex h-[892px] border-t border-[#cbb2b9] ${SANS}`}>
        <div className="flex min-w-0 flex-1 flex-col">
          <SiteHeader />
          <main className="flex h-[706px] overflow-hidden">
            <Sidebar />
            <section className="w-[945px] shrink-0 bg-white pl-[25px]">
              <div className="flex h-[63px] items-start overflow-hidden text-[20px] text-black">
                <p className="-mt-[22px] ml-[2px] whitespace-nowrap leading-[24px]">
                  appear at the bottom. Within an expression, higher precedence operators
                </p>
              </div>
              <OperatorTable />
            </section>
            <div className="flex-1 bg-[#eee]" />
          </main>
          <CookieBar />
        </div>
        <ScrollBar />
      </div>
      <Taskbar />
    </div>
  );
}
